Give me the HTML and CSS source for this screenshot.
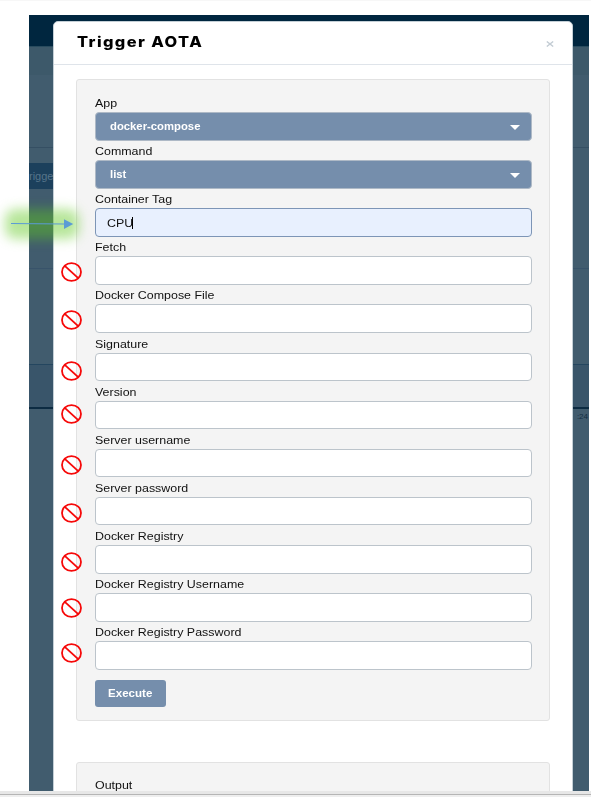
FILE: index.html
```
<!DOCTYPE html>
<html lang="en">
<head>
<meta charset="utf-8">
<title>Trigger AOTA</title>
<link rel="stylesheet" href="styles.css">
</head>
<body>
<svg class="defs" width="0" height="0" aria-hidden="true"><symbol id="no" viewBox="0 0 21 20"><ellipse cx="10.5" cy="10" rx="9.5" ry="8.9"/><path d="M3.8 3.8 17.2 16.2"/></symbol></svg>
<div class="screen">
  <div class="backdrop">
    <div class="topbar"></div>
    <div class="subbar"></div>
    <div class="pane"></div>
    <div class="actions"><span class="ghost">rigger</span></div>
    <div class="gap"></div>
    <div class="chart"></div>
    <div class="axis"><span>:24</span></div>
  </div>
  <section class="modal">
    <header class="head"><h1>Trigger AOTA</h1><svg class="close" viewBox="0 0 8 6"><path d="M.8.5 7.2 5.5M7.2.5.8 5.5"/></svg></header>
    <div class="panel form">
      <div class="row"><label><span>App</span></label><div class="field select"><span>docker-compose</span><i></i></div></div>
      <div class="row"><label><span>Command</span></label><div class="field select"><span>list</span><i></i></div></div>
      <div class="row"><label><span>Container Tag</span></label><div class="field active"><span>CPU</span><b></b></div></div>
      <div class="row"><label><span>Fetch</span></label><div class="field"></div></div>
      <div class="row"><label><span>Docker Compose File</span></label><div class="field"></div></div>
      <div class="row"><label><span>Signature</span></label><div class="field"></div></div>
      <div class="row"><label><span>Version</span></label><div class="field"></div></div>
      <div class="row"><label><span>Server username</span></label><div class="field"></div></div>
      <div class="row"><label><span>Server password</span></label><div class="field"></div></div>
      <div class="row"><label><span>Docker Registry</span></label><div class="field"></div></div>
      <div class="row"><label><span>Docker Registry Username</span></label><div class="field"></div></div>
      <div class="row"><label><span>Docker Registry Password</span></label><div class="field"></div></div>
      <div class="execute"><span>Execute</span></div>
    </div>
    <div class="panel output"><label><span>Output</span></label></div>
  </section>
</div>
<footer class="frame"></footer>
<div class="glow"></div>
<svg class="arrow" viewBox="0 0 64 12"><path d="M1 5.5 54 6" fill="none" stroke="#5b9bd5" stroke-width="1.1"/><path d="M54 1.2 63.2 6 54 11Z" fill="#5b9bd5"/></svg>
<svg class="no n1"><use href="#no"/></svg>
<svg class="no n2"><use href="#no"/></svg>
<svg class="no n3"><use href="#no"/></svg>
<svg class="no n4"><use href="#no"/></svg>
<svg class="no n5"><use href="#no"/></svg>
<svg class="no n6"><use href="#no"/></svg>
<svg class="no n7"><use href="#no"/></svg>
<svg class="no n8"><use href="#no"/></svg>
<svg class="no n9"><use href="#no"/></svg>
</body>
</html>
```
FILE: styles.css
```
* { box-sizing: border-box; }
body {
  margin: 0;
  height: 797px;
  overflow: hidden;
  position: relative;
  background: #fff;
  border-top: 1px solid #f7f7f7;
  font-family: "Liberation Sans", Arial, sans-serif;
  font-size: 11px;
  color: #111;
}
.defs { position: absolute; }
.screen {
  position: relative;
  width: 560px;
  height: 776px;
  margin: 14px 0 0 29px;
  overflow: hidden;
  background: #415c6e;
}
.backdrop { display: flex; flex-direction: column; height: 100%; }
.topbar { height: 32px; background: #00263f; border-bottom: 1px solid #284b5e; }
.subbar { height: 28px; background: #3d596a; }
.pane { height: 73px; border-bottom: 1px solid #354f63; }
.actions { height: 121px; padding-top: 15px; border-bottom: 1px solid #38536a; }
.ghost { display: block; width: 60px; height: 26px; line-height: 26px; background: #1c405c; color: #56748a; font-size: 11px; }
.gap { height: 95px; }
.chart { height: 45px; background: #39556a; border-top: 1px solid #24465f; border-bottom: 2px solid #0c2b42; }
.axis { text-align: right; padding: 3px 1px 0; font-size: 8px; line-height: 10px; color: #132e42; }
.modal {
  position: absolute;
  left: 24px;
  top: 6px;
  width: 520px;
  height: 780px;
  background: #fff;
  border: 1px solid #c4cfd6;
  border-radius: 5px 5px 0 0;
}
.head {
  height: 43px;
  border-bottom: 1px solid #dfe4ea;
  display: flex;
  align-items: center;
  justify-content: space-between;
  padding: 1px 18px 0 23px;
}
h1 {
  margin: 0 0 4px;
  font: 800 14.5px/20px Inter, sans-serif;
  letter-spacing: 1.25px;
  color: #000;
  transform: scaleX(1.13);
  transform-origin: left;
  white-space: nowrap;
}
.close { width: 8px; height: 6px; stroke: #c3ccd4; stroke-width: 1.4; }
.panel { margin: 14px 22px 0; background: #f4f4f4; border: 1px solid #e2e2e2; border-radius: 3px; padding: 0 17.5px 0 17.5px; }
.form { height: 642px; padding-top: 13px; }
.row { height: 48.12px; }
label { display: block; height: 19px; line-height: 21px; }
label span, .field span, .execute span { display: inline-block; transform: scaleX(1.13); transform-origin: left; white-space: nowrap; }
.field {
  height: 28.6px;
  background: #fff;
  border: 1px solid #bcc4cb;
  border-radius: 4px;
  display: flex;
  align-items: center;
  padding-left: 14px;
}
.select { background: #758eac; border-color: #aeb9c6; color: #fff; justify-content: space-between; padding-right: 11px; font-weight: bold; font-size: 10px; }
.select i { border: 5.5px solid transparent; border-top-color: #fff; border-bottom: 0; margin-top: 3px; }
.active { background: #e8f0fe; border-color: #7d95b6; padding-left: 11px; }
.active b { width: 1px; height: 12px; background: #000; margin-left: 2px; }
.execute {
  width: 71px;
  height: 27px;
  margin-top: 10px;
  background: #758eac;
  border-radius: 3px;
  color: #fff;
  font-weight: bold;
  font-size: 10.5px;
  line-height: 26px;
  padding-left: 13px;
}
.execute span { transform: scaleX(1.1); }
.output { height: 80px; margin-top: 41px; padding-top: 12px; }
.frame { height: 6px; background: #e7e7e7; border-bottom: 2px solid #eee; box-shadow: inset 0 -1px #b5b5b5; }
.glow { position: absolute; left: 5px; top: 208px; width: 74px; height: 30px; border-radius: 10px; background: rgba(96, 200, 32, .45); filter: blur(6px); }
.arrow { position: absolute; left: 10px; top: 217px; width: 64px; height: 12px; }
.no { position: absolute; left: 61px; width: 21px; height: 20px; fill: none; stroke: #f60808; stroke-width: 1.8; }
.n1 { top: 261px; }
.n2 { top: 309px; }
.n3 { top: 360px; }
.n4 { top: 403px; }
.n5 { top: 454px; }
.n6 { top: 502px; }
.n7 { top: 551px; }
.n8 { top: 597px; }
.n9 { top: 642px; }
```
